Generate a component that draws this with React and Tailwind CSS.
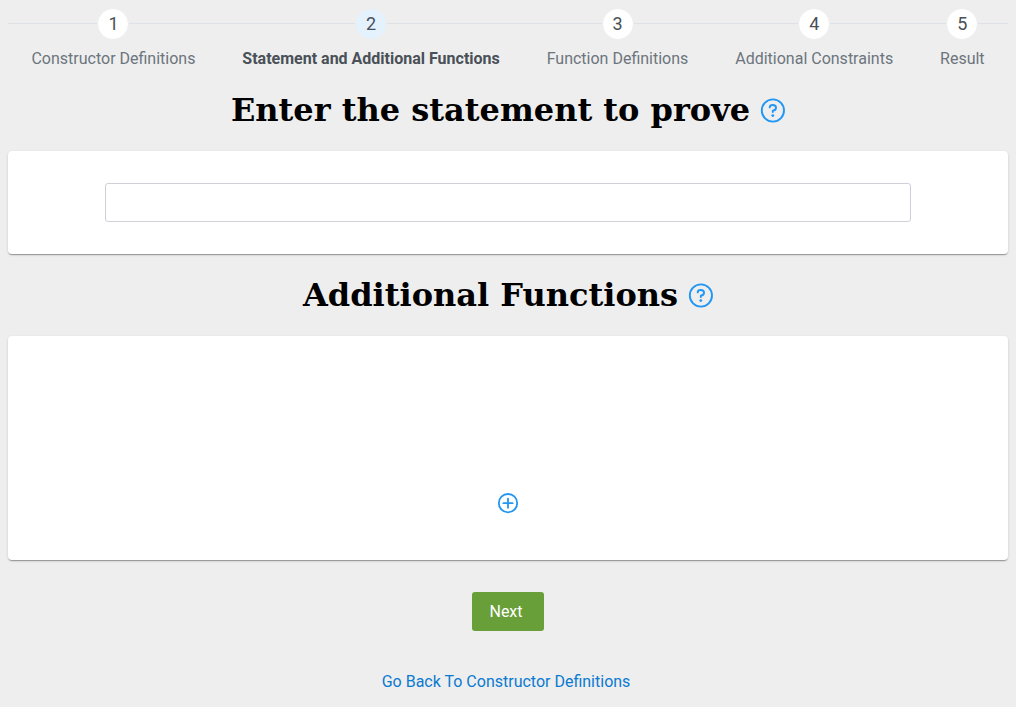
import React from "react";

const steps = [
  "Constructor Definitions",
  "Statement and Additional Functions",
  "Function Definitions",
  "Additional Constraints",
  "Result",
];

function Steps({ current }) {
  return (
    <nav aria-label="Progress">
      <ol className="flex">
        {steps.map((label, i) => {
          const active = i === current;
          return (
            <li
              key={label}
              aria-current={active ? "step" : undefined}
              className="flex flex-auto flex-col items-center"
            >
              <div className="flex w-full items-center">
                <span className="h-0.5 flex-1 border-t border-[#dee2e6]" />
                <span
                  className={
                    "flex size-8 items-center justify-center rounded-full border border-[#eeeeee] text-lg text-[#495057] " +
                    (active ? "bg-[#e3f2fd]" : "bg-white")
                  }
                >
                  {i + 1}
                </span>
                <span className="h-0.5 flex-1 border-t border-[#dee2e6]" />
              </div>
              <span
                className={
                  "mt-2 whitespace-nowrap leading-[22px] " +
                  (active ? "font-bold text-[#495057]" : "text-[#6c757d]")
                }
              >
                {label}
              </span>
            </li>
          );
        })}
      </ol>
    </nav>
  );
}

function HelpButton({ label }) {
  return (
    <button type="button" aria-label={label} className="text-[#2196f3]">
      <svg viewBox="0 0 26 26" className="size-[26px]" fill="none" stroke="currentColor" strokeWidth="1.9" strokeLinecap="round" strokeLinejoin="round">
        <circle cx="13.9" cy="13.5" r="11.1" />
        <path d="M10.7 10.4C10.7 8.8 12 8 13.8 8S17 9.2 17 10.8S15.7 13.5 13.8 13.8V15" />
        <circle cx="13.8" cy="18.6" r="1.4" fill="currentColor" stroke="none" />
      </svg>
    </button>
  );
}

function Heading({ id, children, help }) {
  return (
    <div className="flex items-center justify-center gap-[9px]">
      <h1 id={id} className="font-['DejaVu_Serif',serif] text-[32px] font-bold leading-[38px] text-black">
        {children}
      </h1>
      <HelpButton label={help} />
    </div>
  );
}

function Card({ className, children }) {
  return (
    <section
      className={
        "flex justify-center rounded-[4px] bg-white py-8 shadow-[0_2px_1px_-1px_rgba(0,0,0,0.2),0_1px_1px_0_rgba(0,0,0,0.14),0_1px_3px_0_rgba(0,0,0,0.12)] " +
        className
      }
    >
      {children}
    </section>
  );
}

export default function App() {
  return (
    <main className="min-h-screen bg-[#eeeeee] px-2 pt-2 font-['Roboto',sans-serif] text-base">
      <Steps current={1} />

      <div className="mt-[21px]">
        <Heading id="statement" help="Help with the statement">
          Enter the statement to prove
        </Heading>
      </div>
      <Card className="mt-[22px] px-[97px]">
        <input
          type="text"
          aria-labelledby="statement"
          className="h-[39px] w-full rounded-[3px] border border-[#d0d0da] bg-white px-2 text-[#495057] outline-none focus:border-[#2196f3]"
        />
      </Card>

      <div className="mt-[22px]">
        <Heading id="functions" help="Help with additional functions">
          Additional Functions
        </Heading>
      </div>
      <Card className="mt-[22px] min-h-56 items-end px-8">
        <button type="button" aria-label="Add function" className="mb-3 text-[#2196f3]">
          <svg viewBox="0 0 26 26" className="size-[26px]" fill="none" stroke="currentColor" strokeWidth="1.8" strokeLinecap="round">
            <circle cx="13" cy="13.2" r="9.2" />
            <path d="M13 8.6v9.2M8.4 13.2h9.2" />
          </svg>
        </button>
      </Card>

      <div className="mt-8 flex flex-col items-center gap-[31px]">
        <button type="button" className="h-[39px] rounded-[3px] bg-[#689f38] px-[17px] text-white">
          Next{"\u00a0"}
        </button>
        <a href="#constructors" className="py-2 text-[#0b7ad1]">
          Go Back To Constructor Definitions{"\u00a0"}
        </a>
      </div>
    </main>
  );
}
